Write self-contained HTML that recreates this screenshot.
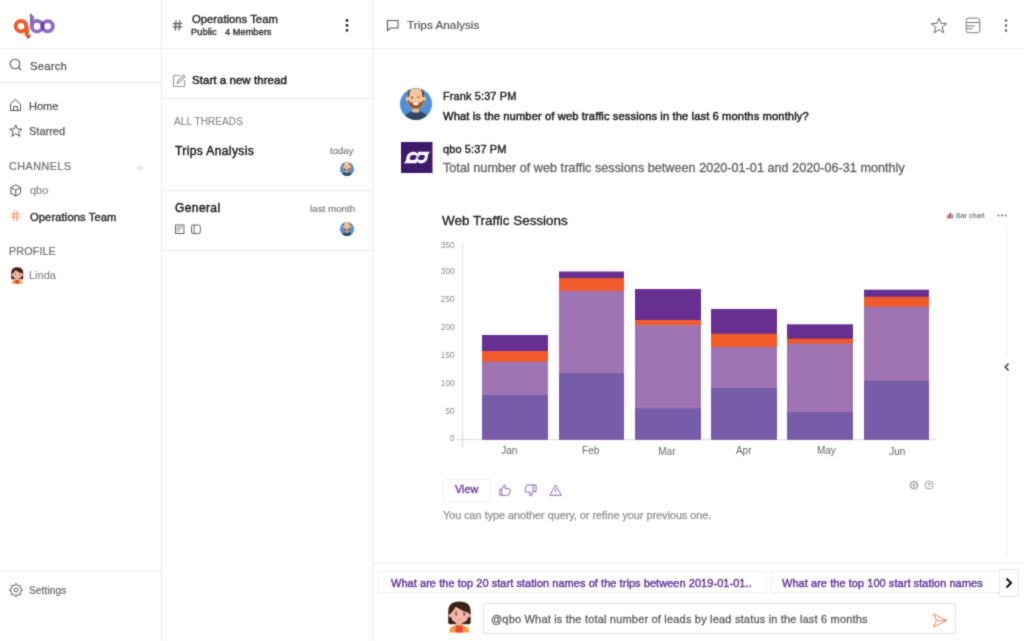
<!DOCTYPE html>
<html><head><meta charset="utf-8">
<style>
*{margin:0;padding:0;box-sizing:border-box}
html,body{width:1024px;height:641px;overflow:hidden;background:#fff;font-family:"Liberation Sans",sans-serif}
.a{position:absolute;white-space:nowrap;will-change:transform}
.ln{position:absolute;background:#ebebeb}
svg{position:absolute;overflow:visible}
</style></head><body>
<svg width="0" height="0" style="position:absolute"><filter id="softb" x="0" y="0" width="100%" height="100%" color-interpolation-filters="sRGB"><feConvolveMatrix order="3" kernelMatrix="1 2 1 2 12 2 1 2 1" divisor="24" edgeMode="duplicate" preserveAlpha="true"/></filter></svg>
<div id="wrap" style="position:absolute;left:0;top:0;width:1024px;height:641px;background:#fff;filter:url(#softb)">

<svg width="0" height="0" style="position:absolute">
<defs>
<clipPath id="fclip"><circle cx="16" cy="16" r="16"/></clipPath>
<symbol id="frank" viewBox="0 0 32 32">
 <g clip-path="url(#fclip)">
  <rect width="32" height="32" fill="#4f90d6"/>
  <ellipse cx="16" cy="33.5" rx="13" ry="10.5" fill="#2e4a5e"/>
  <rect x="12.3" y="16" width="6.6" height="8.5" fill="#efbd92"/>
  <ellipse cx="7.3" cy="10.8" rx="1.7" ry="2.4" fill="#f0c096"/>
  <ellipse cx="24.2" cy="10.8" rx="1.7" ry="2.4" fill="#f0c096"/>
  <path d="M7.6 6 Q7.6 0.5 15.8 0.5 Q24 0.5 24 6 L24 13 Q24 20.5 15.8 20.5 Q7.6 20.5 7.6 13 Z" fill="#f6c79a"/>
  <path d="M7.6 9 L7.6 4.5 Q8.3 1.8 11 1.2 L9.6 4.5 L9.2 9 Z" fill="#6a4030"/>
  <path d="M24 9 L24 4.5 Q23.3 1.8 20.6 1.2 L22 4.5 L22.4 9 Z" fill="#6a4030"/>
  <path d="M7.8 11.5 Q8 20.8 15.8 20.8 Q23.6 20.8 23.8 11.5 L22.6 12.5 Q21.5 15.5 15.8 14.6 Q10.1 15.5 9 12.5 Z" fill="#9a5530"/>
  <ellipse cx="15.8" cy="15.8" rx="2.9" ry="1.4" fill="#fff"/>
  <path d="M13 16.4 Q15.8 18.2 18.6 16.4 Q15.8 17.4 13 16.4 Z" fill="#e08a80"/>
  <ellipse cx="12" cy="9.4" rx="0.9" ry="1" fill="#5a3020"/>
  <path d="M17.2 9.5 Q18.5 8.6 19.8 9.5" fill="none" stroke="#5a3020" stroke-width="0.9"/>
 </g>
</symbol>
<symbol id="linda" viewBox="0 0 27 32">
  <path d="M2.2 21.5 Q2.2 23.2 4.2 23.2 L22.7 23.2 Q24.7 23.2 24.7 21.5 L24.7 11 Q24.7 0.6 13.4 0.6 Q2.2 0.6 2.2 11 Z" fill="#3b2218"/>
  <rect x="9.8" y="19" width="6.6" height="7" fill="#eaa796"/>
  <ellipse cx="4.2" cy="14.5" rx="1.7" ry="1.8" fill="#f0b2a2"/>
  <ellipse cx="23.4" cy="14.5" rx="1.7" ry="1.8" fill="#f0b2a2"/>
  <path d="M4.8 12.5 Q4.5 22 13.6 22.2 Q22.8 22 22.6 12.5 L22.6 11.8 Q15 9.5 9.8 5.8 Q7.5 10 4.8 12.2 Z" fill="#f3b6a6"/>
  <path d="M3.3 31.6 Q3.3 25 9.6 24.6 L16.7 24.6 Q23.3 25 23.3 31.6 Z" fill="#f3a03a"/>
  <path d="M9.6 24.6 L16.7 24.6 L16.7 31.6 L9.6 31.6 Z" fill="#e8473b"/>
  <ellipse cx="10.2" cy="13.4" rx="0.9" ry="1.1" fill="#5a2c20"/>
  <ellipse cx="18.2" cy="13.4" rx="0.9" ry="1.1" fill="#5a2c20"/>
  <path d="M8.6 11.4 Q10 10.6 11.4 11.2 M16.8 11.2 Q18.2 10.6 19.6 11.4" fill="none" stroke="#5a2c20" stroke-width="0.7"/>
  <path d="M12.2 18.2 Q13.6 18.9 15 18.2" fill="none" stroke="#d0857a" stroke-width="0.6"/>
</symbol>
</defs></svg>
<!-- ===== LEFT SIDEBAR ===== -->
<div class="ln" style="left:161px;top:0;width:1px;height:641px"></div>
<div class="ln" style="left:0;top:48px;width:161px;height:1px"></div>
<div class="ln" style="left:0;top:82px;width:161px;height:1px"></div>
<div class="ln" style="left:0;top:571px;width:161px;height:1px"></div>

<!-- logo -->
<svg style="left:0;top:0" width="60" height="48" viewBox="0 0 60 48">
  <defs><clipPath id="bclip"><path d="M29.8 26.2 a7.2 7.2 0 1 0 14.4 0 a7.2 7.2 0 1 0 -14.4 0 Z M33.5 26.2 a3.5 3.5 0 1 0 7 0 a3.5 3.5 0 1 0 -7 0 Z" clip-rule="evenodd"/></clipPath></defs>
  <circle cx="21" cy="26.2" r="5.3" fill="none" stroke="#f05a28" stroke-width="4"/>
  <path d="M24.6 27 L28.9 26.5 L28.9 36.8 L27.9 39.2 L24.6 34.8 Z" fill="#f05a28"/>
  <path d="M28.1 35.9 L32 35.3 L28.1 38.8 Z" fill="#5a2a90"/>
  <path d="M29.9 12.8 L33.9 16.6 L33.9 27 L29.9 27 Z" fill="#8a6bbf"/>
  <circle cx="37" cy="26.2" r="5.35" fill="none" stroke="#8a6bbf" stroke-width="3.7"/>
  <circle cx="47.7" cy="26.2" r="5.15" fill="none" stroke="#8a6bbf" stroke-width="3.8"/>
  <g clip-path="url(#bclip)"><circle cx="47.7" cy="26.2" r="5.15" fill="none" stroke="#6a3c9e" stroke-width="3.8"/></g>
</svg>

<!-- search -->
<svg style="left:9px;top:58px" width="14" height="14" viewBox="0 0 14 14"><circle cx="6" cy="6" r="4.8" fill="none" stroke="#555" stroke-width="1.1"/><path d="M9.5 9.5 L12.2 12.2" stroke="#555" stroke-width="1.2"/></svg>
<div class="a" style="left:29.5px;top:60.5px;font-size:11.3px;line-height:11.3px;color:#555;-webkit-text-stroke:0.25px #555;letter-spacing:0.2px">Search</div>

<!-- home -->
<svg style="left:9px;top:98px" width="14" height="14" viewBox="0 0 14 14"><path d="M1.5 6 L6.5 1.5 L11.5 6 L11.5 12.5 L1.5 12.5 Z" fill="none" stroke="#555" stroke-width="1"/><path d="M4.5 12.5 L4.5 8.5 L8.5 8.5 L8.5 12.5" fill="none" stroke="#555" stroke-width="1"/></svg>
<div class="a" style="left:29.3px;top:101px;font-size:11px;line-height:11px;color:#555;-webkit-text-stroke:0.25px #555">Home</div>

<!-- starred -->
<svg style="left:9px;top:124px" width="14" height="14" viewBox="0 0 14 14"><path d="M6.8 0.8 L8.5 5 L13 5.1 L9.5 7.9 L10.8 12.4 L6.8 9.8 L2.9 12.4 L4.1 7.9 L0.6 5.1 L5.1 5 Z" fill="none" stroke="#555" stroke-width="1"/></svg>
<div class="a" style="left:29.3px;top:126.3px;font-size:11px;line-height:11px;color:#555;-webkit-text-stroke:0.25px #555">Starred</div>

<div class="a" style="left:9px;top:160.5px;font-size:10.8px;line-height:10.8px;color:#6e6e6e;-webkit-text-stroke:0.2px #6e6e6e;letter-spacing:0.45px">CHANNELS</div>
<svg style="left:136px;top:164px" width="9" height="8" viewBox="0 0 9 8"><path d="M0.5 4 L8 4 M4.25 0.3 L4.25 7.7" stroke="#d4d4d4" stroke-width="1" fill="none"/></svg>

<svg style="left:10px;top:183.6px" width="12" height="13" viewBox="0 0 12 13"><path d="M5.7 0.7 L10.5 3.5 L10.5 9.3 L5.7 12 L0.9 9.3 L0.9 3.5 Z M0.9 3.5 L5.7 6.3 L10.5 3.5 M5.7 6.3 L5.7 12" fill="none" stroke="#555" stroke-width="1" stroke-linejoin="round"/></svg>
<div class="a" style="left:29.8px;top:185.2px;font-size:11px;line-height:11px;color:#888;-webkit-text-stroke:0.2px #888">qbo</div>

<svg style="left:0;top:200px" width="30" height="30" viewBox="0 200 30 30"><path d="M14.1 210.4 L13.4 220.9 M17.1 210.4 L16.5 220.9 M10.9 214.1 L20.1 214.1 M10.9 217.3 L20.1 217.3" stroke="#f08a60" stroke-width="0.95" fill="none"/></svg>
<div class="a" style="left:29.6px;top:211.5px;font-size:11.2px;line-height:11.2px;color:#2a2a2a;-webkit-text-stroke:0.4px #2a2a2a;letter-spacing:0.1px">Operations Team</div>

<div class="a" style="left:9px;top:245.5px;font-size:10.8px;line-height:10.8px;color:#6e6e6e;-webkit-text-stroke:0.2px #6e6e6e;letter-spacing:0.1px">PROFILE</div>

<!-- linda avatar -->
<svg style="left:10.3px;top:266.5px" width="14.5" height="17" viewBox="0 0 27 32"><use href="#linda"/></svg>
<div class="a" style="left:29px;top:270px;font-size:11px;line-height:11px;color:#888;-webkit-text-stroke:0.2px #888">Linda</div>

<!-- settings -->
<svg style="left:9px;top:582.5px" width="14" height="14" viewBox="0 0 14.5 14.5"><path d="M6.6 0.8 L8 0.8 L8.4 2.5 L9.8 3.2 L11.4 2.4 L12.4 3.4 L11.6 5 L12.2 6.4 L13.6 6.8 L13.6 8.2 L12.1 8.6 L11.5 10 L12.3 11.6 L11.3 12.6 L9.7 11.8 L8.3 12.4 L7.9 13.8 L6.5 13.8 L6.1 12.3 L4.7 11.7 L3.1 12.5 L2.1 11.5 L2.9 9.9 L2.3 8.5 L0.8 8.1 L0.8 6.7 L2.3 6.3 L2.9 4.9 L2.1 3.3 L3.1 2.3 L4.7 3.1 L6.1 2.5 Z" fill="none" stroke="#555" stroke-width="1"/><circle cx="7.2" cy="7.3" r="2" fill="none" stroke="#555" stroke-width="1"/></svg>
<div class="a" style="left:29px;top:585.8px;font-size:10px;line-height:10px;color:#666;-webkit-text-stroke:0.2px #666;letter-spacing:0.15px">Settings</div>

<!-- ===== MIDDLE PANEL ===== -->
<div class="ln" style="left:372px;top:0;width:1px;height:641px"></div>
<div class="ln" style="left:162px;top:48px;width:210px;height:1px"></div>
<div class="ln" style="left:162px;top:98px;width:210px;height:1px"></div>
<div class="ln" style="left:162px;top:190px;width:210px;height:1px"></div>
<div class="ln" style="left:162px;top:250px;width:210px;height:1px"></div>

<svg style="left:160px;top:0" width="30" height="40" viewBox="160 0 30 40"><path d="M176.1 20.1 L175.3 30.6 M179.8 20.1 L179 30.6 M172.9 23.55 L182.2 23.55 M172.9 26.8 L182.2 26.8" stroke="#555" stroke-width="1.15" fill="none"/></svg>
<div class="a" style="left:191.5px;top:13.7px;font-size:11.3px;line-height:11.3px;color:#2a2a2a;-webkit-text-stroke:0.4px #2a2a2a">Operations Team</div>
<div class="a" style="left:190.8px;top:28.2px;font-size:9.2px;line-height:9.2px;color:#333;-webkit-text-stroke:0.4px #333;letter-spacing:0.1px">Public</div><div class="a" style="left:224.5px;top:28.2px;font-size:9.2px;line-height:9.2px;color:#333;-webkit-text-stroke:0.4px #333;letter-spacing:0.05px">4 Members</div>
<svg style="left:344px;top:18px" width="6" height="16" viewBox="0 0 6 16"><circle cx="3" cy="2.5" r="1.4" fill="#222"/><circle cx="3" cy="7.4" r="1.4" fill="#222"/><circle cx="3" cy="12.3" r="1.4" fill="#222"/></svg>

<svg style="left:172px;top:74px" width="14" height="14" viewBox="0 0 14 14"><path d="M8.5 1.5 L2 1.5 L1.5 2 L1.5 12 L2 12.5 L12 12.5 L12.5 12 L12.5 6" fill="none" stroke="#999" stroke-width="1.1"/><path d="M11.5 1.3 L13 2.8 L7 8.8 L5 9.5 L5.7 7.3 Z" fill="none" stroke="#999" stroke-width="1.1"/></svg>
<div class="a" style="left:191.5px;top:74.6px;font-size:11.5px;line-height:11.5px;color:#1a1a1a;-webkit-text-stroke:0.45px #1a1a1a;letter-spacing:0.05px">Start a new thread</div>

<div class="a" style="left:173.5px;top:116.5px;font-size:10px;line-height:10px;color:#888;-webkit-text-stroke:0.15px #888;letter-spacing:0.1px">ALL THREADS</div>

<div class="a" style="left:175px;top:144.5px;font-size:12px;line-height:12px;color:#1a1a1a;letter-spacing:0.4px;-webkit-text-stroke:0.45px #1a1a1a">Trips Analysis</div>
<div class="a" style="left:330px;top:145.5px;font-size:9.6px;line-height:9.6px;color:#777;-webkit-text-stroke:0.15px #777">today</div>

<div class="a" style="left:174.5px;top:202px;font-size:12px;line-height:12px;color:#1a1a1a;letter-spacing:0.4px;-webkit-text-stroke:0.45px #1a1a1a">General</div>
<div class="a" style="left:310px;top:203.6px;font-size:9.8px;line-height:9.8px;color:#777;-webkit-text-stroke:0.15px #777">last month</div>
<svg style="left:174px;top:223.6px" width="30" height="12" viewBox="0 0 30 12"><rect x="1.5" y="1" width="8.4" height="8.5" fill="none" stroke="#666" stroke-width="1"/><rect x="3.3" y="2.6" width="2.1" height="4.8" rx="1" fill="none" stroke="#777" stroke-width="0.8"/><path d="M6.1 2.9 L8.2 2.9 M6.1 4.2 L8 4.2" stroke="#888" stroke-width="0.7"/><rect x="17.5" y="1" width="8.8" height="8.5" rx="1.5" fill="none" stroke="#666" stroke-width="1"/><path d="M20.2 1 L20.2 9.5" stroke="#666" stroke-width="1"/></svg>

<!-- frank small avatars -->
<svg style="left:340px;top:162.3px" width="14" height="14" viewBox="0 0 32 32"><use href="#frank"/></svg>
<svg style="left:340px;top:222.3px" width="14" height="14" viewBox="0 0 32 32"><use href="#frank"/></svg>

<!-- ===== MAIN ===== -->
<div class="ln" style="left:373px;top:48px;width:651px;height:1px"></div>
<svg style="left:386px;top:19px" width="14" height="13" viewBox="0 0 14 13"><path d="M1.5 1.5 L12 1.5 L12 9 L4.5 9 L1.5 11.5 Z" fill="none" stroke="#555" stroke-width="1.1"/></svg>
<div class="a" style="left:406.5px;top:19.5px;font-size:11.8px;line-height:11.8px;color:#555;-webkit-text-stroke:0.2px #555">Trips Analysis</div>

<svg style="left:930px;top:17px" width="18" height="17" viewBox="0 0 18 17"><path d="M9 1 L11 6.4 L16.8 6.6 L12.2 10.2 L13.8 15.8 L9 12.6 L4.2 15.8 L5.8 10.2 L1.2 6.6 L7 6.4 Z" fill="none" stroke="#666" stroke-width="1"/></svg>
<svg style="left:965px;top:17px" width="16" height="16" viewBox="0 0 16 16"><rect x="1.2" y="1.1" width="13.6" height="14.6" rx="2.4" fill="none" stroke="#777" stroke-width="1"/><path d="M1.5 5.5 L14.5 5.5 M1.5 9 L9.8 9 M1.5 11.7 L7.5 11.7" stroke="#777" stroke-width="1"/></svg>
<svg style="left:1003px;top:18px" width="6" height="15" viewBox="0 0 6 15"><circle cx="3" cy="2.5" r="1.2" fill="#555"/><circle cx="3" cy="7.5" r="1.2" fill="#555"/><circle cx="3" cy="12.5" r="1.2" fill="#555"/></svg>

<!-- frank avatar -->
<svg style="left:400px;top:88px" width="32" height="32" viewBox="0 0 32 32"><use href="#frank"/></svg>
<div class="a" style="left:443px;top:91px;font-size:11px;line-height:11px;color:#222;-webkit-text-stroke:0.4px #222;letter-spacing:0.1px">Frank 5:37 PM</div>
<div class="a" style="left:443px;top:110.5px;font-size:11.2px;line-height:11.2px;color:#1a1a1a;-webkit-text-stroke:0.45px #1a1a1a;letter-spacing:0.1px">What is the number of web traffic sessions in the last 6 months monthly?</div>

<!-- qbo square -->
<svg style="left:401px;top:142px" width="32" height="31" viewBox="0 0 32 31"><rect width="31.5" height="31" fill="#3d1a6a"/>
<path d="M2.6 21.3 L15.6 21.3 L16.9 15.5 C17.4 12 15.8 9.8 12.8 9.8 C8.7 9.8 5.9 12.3 5.5 15.5 C5.2 18.2 4.5 20.3 2.6 21.3 Z" fill="#fff"/>
<path d="M29.6 9.8 L17 9.8 L15.7 15.5 C15.2 19 16.8 21.3 19.8 21.3 C23.9 21.3 26.3 18.7 26.6 15.5 C26.8 12.5 27.8 10.6 29.6 9.8 Z" fill="#fff"/>
<g transform="translate(12.1 15.4) skewX(-14)"><rect x="-3.2" y="-2.5" width="6.4" height="5" rx="2.2" fill="#3d1a6a"/></g>
<g transform="translate(20.5 15.4) skewX(-14)"><rect x="-3.2" y="-2.5" width="6.4" height="5" rx="2.2" fill="#3d1a6a"/></g>
<path d="M16.7 13 L16.1 17.8" stroke="#bdbdbd" stroke-width="0.9"/>
</svg>
<div class="a" style="left:443px;top:143.5px;font-size:11px;line-height:11px;color:#222;-webkit-text-stroke:0.4px #222;letter-spacing:0.1px">qbo 5:37 PM</div>
<div class="a" style="left:443px;top:162px;font-size:12.6px;line-height:12.6px;color:#666;-webkit-text-stroke:0.35px #666;letter-spacing:0.035px">Total number of web traffic sessions between 2020-01-01 and 2020-06-31 monthly</div>

<!-- chart -->
<div class="a" style="left:441.5px;top:214.2px;font-size:13.45px;line-height:13.45px;color:#1a1a1a;-webkit-text-stroke:0.3px #1a1a1a">Web Traffic Sessions</div>
<svg style="left:947.3px;top:213.3px" width="7.5" height="5.5" viewBox="0 0 8 6"><rect x="0" y="2" width="2" height="4" fill="#ee5a2a"/><rect x="2.5" y="0" width="2" height="6" fill="#7a4aa8"/><rect x="5" y="1.5" width="2" height="4.5" fill="#5aa8e0"/></svg>
<div class="a" style="left:955.5px;top:212.6px;font-size:7.1px;line-height:7.1px;color:#666;-webkit-text-stroke:0.1px #666">Bar chart</div>
<svg style="left:997px;top:214px" width="10" height="3" viewBox="0 0 10 3"><circle cx="1.5" cy="1.5" r="1" fill="#666"/><circle cx="5" cy="1.5" r="1" fill="#666"/><circle cx="8.5" cy="1.5" r="1" fill="#666"/></svg>
<div class="ln" style="left:1006px;top:226px;width:1px;height:330px;background:#eee"></div>

<div id="chart"></div>
<svg style="left:0;top:0" width="1024" height="641" viewBox="0 0 1024 641">
  <g font-family="Liberation Sans" font-size="8.2" fill="#8a8a8a" text-anchor="end">
    <text x="454.5" y="247.6">350</text>
    <text x="454.5" y="274.4">300</text>
    <text x="454.5" y="302.3">250</text>
    <text x="454.5" y="330.2">200</text>
    <text x="454.5" y="358.1">150</text>
    <text x="454.5" y="386">100</text>
    <text x="454.5" y="413.9">50</text>
    <text x="454.5" y="440.8">0</text>
  </g>
  <rect x="462" y="244" width="1" height="203" fill="#ddd"/>
  <rect x="457" y="439" width="480" height="1" fill="#ddd"/>
  <!-- Jan -->
  <rect x="482" y="335" width="66" height="104.5" fill="#662f91"/>
  <rect x="482" y="351" width="66" height="88.5" fill="#f15a2b"/>
  <rect x="482" y="361.7" width="66" height="77.8" fill="#9e74b3"/>
  <rect x="482" y="395.1" width="66" height="44.4" fill="#765ca9"/>
  <!-- Feb -->
  <rect x="559" y="271.5" width="65" height="168.0" fill="#662f91"/>
  <rect x="559" y="278.1" width="65" height="161.4" fill="#f15a2b"/>
  <rect x="559" y="290.9" width="65" height="148.6" fill="#9e74b3"/>
  <rect x="559" y="373.3" width="65" height="66.2" fill="#765ca9"/>
  <!-- Mar -->
  <rect x="635" y="289" width="66" height="150.5" fill="#662f91"/>
  <rect x="635" y="320" width="66" height="119.5" fill="#f15a2b"/>
  <rect x="635" y="325" width="66" height="114.5" fill="#9e74b3"/>
  <rect x="635" y="408.3" width="66" height="31.2" fill="#765ca9"/>
  <!-- Apr -->
  <rect x="711" y="309" width="66" height="130.5" fill="#662f91"/>
  <rect x="711" y="333.7" width="66" height="105.8" fill="#f15a2b"/>
  <rect x="711" y="347.1" width="66" height="92.4" fill="#9e74b3"/>
  <rect x="711" y="388" width="66" height="51.5" fill="#765ca9"/>
  <!-- May -->
  <rect x="787" y="324.3" width="66" height="115.2" fill="#662f91"/>
  <rect x="787" y="338.7" width="66" height="100.8" fill="#f15a2b"/>
  <rect x="787" y="343.6" width="66" height="95.9" fill="#9e74b3"/>
  <rect x="787" y="412.3" width="66" height="27.2" fill="#765ca9"/>
  <!-- Jun -->
  <rect x="864" y="289.7" width="65" height="149.8" fill="#662f91"/>
  <rect x="864" y="296.8" width="65" height="142.7" fill="#f15a2b"/>
  <rect x="864" y="306.8" width="65" height="132.7" fill="#9e74b3"/>
  <rect x="864" y="380.8" width="65" height="58.7" fill="#765ca9"/>
  <g font-family="Liberation Sans" font-size="10" fill="#666" text-anchor="middle">
    <text x="509.3" y="454">Jan</text>
    <text x="590.7" y="454">Feb</text>
    <text x="666.9" y="454.8">Mar</text>
    <text x="743.7" y="454">Apr</text>
    <text x="826.4" y="454">May</text>
    <text x="897.3" y="454.8">Jun</text>
  </g>
</svg>

<!-- chevron -->
<div class="ln" style="left:1004px;top:357px;width:5px;height:18px;background:#fff"></div>
<svg style="left:1002.5px;top:361.5px" width="8" height="10" viewBox="0 0 8 10"><path d="M5.6 1.6 L2.2 5 L5.6 8.4" fill="none" stroke="#444" stroke-width="1.6"/></svg>

<!-- view / feedback -->
<div class="a" style="left:442.5px;top:478.5px;width:47.5px;height:23px;border:1px solid #f0f0f0;border-radius:2px"></div>
<div class="a" style="left:455px;top:483.9px;font-size:10.8px;line-height:10.8px;color:#6e3ea0;-webkit-text-stroke:0.4px #6e3ea0;letter-spacing:0px">View</div>
<svg style="left:498.6px;top:484.3px" width="12.2" height="12.2" viewBox="0 0 13 13"><path d="M0.8 5.5 L3 5.5 L3 12 L0.8 12 Z M3 5.5 L5.5 1 Q7 0.8 6.8 3 L6.5 5 L11 5 Q12.3 5.3 12 6.8 L10.8 11 Q10.5 12 9.5 12 L3 12" fill="none" stroke="#8460b8" stroke-width="1"/></svg>
<svg style="left:524px;top:483.5px" width="13" height="13" viewBox="0 0 13 13"><path d="M9.2 1 L12 1 L12 7.5 L9.2 7.5 Z M9.2 7.5 L7 12 Q5.5 12.2 5.8 10 L6.2 8 L1.8 8 Q0.6 7.7 1 6.2 L2.2 2 Q2.5 1 3.5 1 L9.2 1" fill="none" stroke="#8460b8" stroke-width="1"/></svg>
<svg style="left:549.2px;top:483.6px" width="13.2" height="12.3" viewBox="0 0 14 13"><path d="M7 1 L13 12 L1 12 Z" fill="none" stroke="#8460b8" stroke-width="1" stroke-linejoin="round"/><path d="M7 5 L7 8.5 M7 9.8 L7 10.6" stroke="#8460b8" stroke-width="1"/></svg>
<svg style="left:909px;top:480px" width="10" height="10" viewBox="0 0 10 10"><circle cx="5" cy="5" r="3.9" fill="none" stroke="#888" stroke-width="0.9"/><path d="M1.2 4 L8.8 4 M1.2 6.2 L8.8 6.2 M5 1 L5 9" fill="none" stroke="#999" stroke-width="0.7"/></svg>
<svg style="left:924px;top:480px" width="10" height="10" viewBox="0 0 10 10"><circle cx="5" cy="5" r="4" fill="none" stroke="#888" stroke-width="0.8"/><text x="5" y="7.2" font-size="6" text-anchor="middle" fill="#777" font-weight="bold" font-family="Liberation Sans">?</text></svg>
<div class="a" style="left:443px;top:510px;font-size:10.8px;line-height:10.8px;color:#8e8e8e;-webkit-text-stroke:0.25px #8e8e8e">You can type another query, or refine your previous one.</div>

<!-- bottom -->
<div class="ln" style="left:373px;top:563px;width:651px;height:1px"></div>
<div class="a" style="left:378px;top:571px;width:389px;height:22px;border:1px solid #f0f0f0"></div>
<div class="a" style="left:391px;top:578px;font-size:11px;line-height:11px;color:#663a9c;-webkit-text-stroke:0.45px #663a9c;letter-spacing:0.05px">What are the top 20 start station names of the trips between 2019-01-01..</div>
<div class="a" style="left:771px;top:571px;width:230px;height:22px;border:1px solid #f0f0f0"></div>
<div class="a" style="left:781.5px;top:578px;font-size:11px;line-height:11px;color:#663a9c;-webkit-text-stroke:0.45px #663a9c;letter-spacing:0.05px">What are the top 100 start station names</div>
<div class="a" style="left:998.5px;top:568.5px;width:19.5px;height:28px;border:1px solid #e8e8e8;background:#fff"></div>
<svg style="left:1004px;top:577px" width="10" height="12" viewBox="0 0 10 12"><path d="M2.5 1.5 L7 6 L2.5 10.5" fill="none" stroke="#111" stroke-width="2"/></svg>

<!-- linda big avatar -->
<svg style="left:446px;top:601px" width="27" height="32" viewBox="0 0 27 32"><use href="#linda"/></svg>
<div class="a" style="left:483px;top:603px;width:473px;height:31px;border:1px solid #e4e4e4"></div>
<div class="a" style="left:491px;top:613.8px;font-size:11px;line-height:11px;color:#5c5c5c;-webkit-text-stroke:0.3px #5c5c5c;letter-spacing:0.19px">@qbo What is the total number of leads by lead status in the last 6 months</div>
<svg style="left:932px;top:612px" width="16" height="16" viewBox="0 0 16 16"><path d="M1.5 2 L14.5 8.5 L1.5 15 L4.5 8.5 Z M4.5 8.5 L14.5 8.5" fill="none" stroke="#f07e55" stroke-width="0.95" stroke-linejoin="round"/></svg>

</div>
</body></html>
